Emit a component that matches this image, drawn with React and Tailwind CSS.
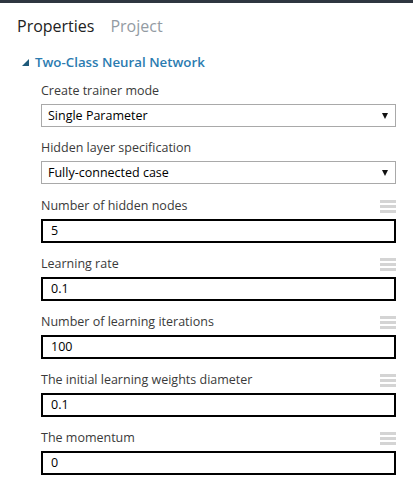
import React from "react";

const font = { fontFamily: '"Open Sans", "Noto Sans", sans-serif' };

function Hamburger() {
  return (
    <div className="flex flex-col gap-[2.5px] w-[16px] mt-[2px]">
      <div className="h-[2.5px] bg-[#d4d4d4]" />
      <div className="h-[2.5px] bg-[#d4d4d4]" />
      <div className="h-[2.5px] bg-[#d4d4d4]" />
    </div>
  );
}

function SelectField({ label, value }) {
  return (
    <div className="flex flex-col">
      <div className="h-[16px] leading-[16px] text-[12.5px] text-[#3a3a3a]">{label}</div>
      <div className="mt-[5px] h-[23px] border border-[#a9a9a9] flex items-center justify-between pl-[6px] pr-[7px]">
        <span className="text-[12.5px] text-black leading-[16px]">{value}</span>
        <svg width="6" height="6" viewBox="0 0 6 6">
          <polygon points="0,0 6,0 3,6" fill="#111" />
        </svg>
      </div>
    </div>
  );
}

function NumberField({ label, value }) {
  return (
    <div className="flex flex-col">
      <div className="h-[16px] flex justify-between items-start">
        <span className="leading-[16px] text-[12.5px] text-[#3a3a3a]">{label}</span>
        <Hamburger />
      </div>
      <div className="mt-[5px] h-[24px] border-2 border-black flex items-center pl-[8px]">
        <span className="text-[12.5px] text-black leading-[16px]">{value}</span>
      </div>
    </div>
  );
}

export default function App() {
  return (
    <div className="w-[413px] h-[478px] bg-white overflow-hidden" style={font}>
      <div className="h-[3px] bg-[#2f3640]" />
      <div className="pt-[13px] pl-[17px] flex gap-[16px] text-[16px] leading-[20px]">
        <span className="text-[#222]">Properties</span>
        <span className="text-[#939ba3]">Project</span>
      </div>
      <div className="mt-[17px] pl-[22px] flex items-center h-[18px]">
        <svg width="7" height="7" viewBox="0 0 7 7" className="mt-[1px]">
          <polygon points="7,0 7,7 0,7" fill="#1e5a7b" />
        </svg>
        <span className="ml-[6px] text-[13.3px] font-semibold text-[#2b7bb0] leading-[18px]">
          Two-Class Neural Network
        </span>
      </div>
      <div className="mt-[12px] pl-[41px] pr-[17px] flex flex-col gap-[13px]">
        <SelectField label="Create trainer mode" value="Single Parameter" />
        <SelectField label="Hidden layer specification" value="Fully-connected case" />
        <div className="flex flex-col gap-[13px] mt-[1px]">
          <NumberField label="Number of hidden nodes" value="5" />
          <NumberField label="Learning rate" value="0.1" />
          <NumberField label="Number of learning iterations" value="100" />
          <NumberField label="The initial learning weights diameter" value="0.1" />
          <NumberField label="The momentum" value="0" />
        </div>
      </div>
    </div>
  );
}
